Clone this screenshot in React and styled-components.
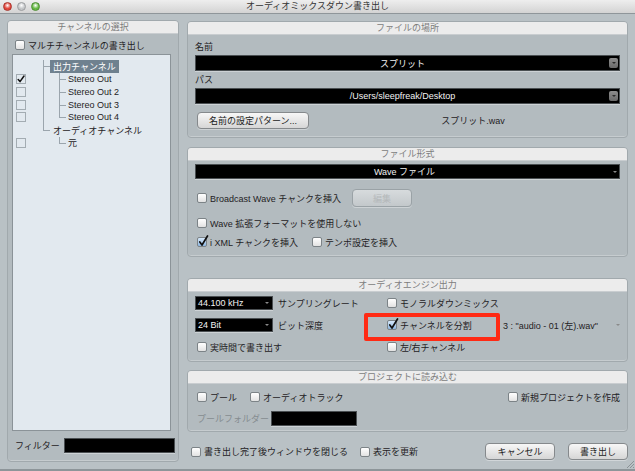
import styled, { createGlobalStyle } from "styled-components";

const GlobalStyle = createGlobalStyle`
	html, body {
		margin: 0;
		padding: 0;
	}

	body {
		background: #b9c1c5;
		font-family: "Liberation Sans", "Noto Sans CJK JP", sans-serif;
		font-size: 9px;
		color: #1f2224;
	}
`;

const Window = styled.div`
	position: relative;
	display: flex;
	flex-direction: column;
	width: 635px;
	height: 471px;
	box-sizing: border-box;
	background: #b9c1c5;
	border-bottom: 2px solid #8d9599;
	overflow: hidden;
`;

const TitleBar = styled.div`
	display: grid;
	grid-template-columns: 1fr auto 1fr;
	align-items: center;
	flex: none;
	height: 13px;
	background: linear-gradient(#eeeeee, #d3d3d3);
	border-bottom: 1px solid #8f969a;

	& > .title {
		color: #333;
		font-size: 9px;
		line-height: 13px;
	}
`;

const Lights = styled.div`
	display: flex;
	gap: 5px;
	padding-left: 3px;
`;

const Light = styled.span`
	width: 9px;
	height: 9px;
	border-radius: 50%;
	box-sizing: border-box;
	border: 1px solid ${({ $edge }) => $edge};
	background: radial-gradient(circle at 50% 35%, #ffffff 0, ${({ $color }) => $color} 55%);
`;

const Body = styled.div`
	display: flex;
	gap: 8px;
	padding: 6px 7px 0 7px;
`;

const Panel = styled.section`
	display: flex;
	flex-direction: column;
	flex: none;
	box-sizing: border-box;
	height: ${({ $h }) => $h}px;
	margin-top: ${({ $mt }) => $mt || 0}px;
	background: #b3bbbf;
	border: 1px solid #a1a9ad;
	border-radius: 4px;
	box-shadow: inset 0 -1px 0 rgba(255, 255, 255, 0.25);
	overflow: hidden;
`;

const PanelHeader = styled.div`
	flex: none;
	height: 12px;
	line-height: 12px;
	background: #ececec;
	color: #7d7d7d;
	text-align: center;
	border-bottom: 1px solid #c9cdd0;
`;

const LeftPanel = styled(Panel)`
	width: 172px;
`;

const RightColumn = styled.div`
	display: flex;
	flex-direction: column;
	width: 441px;
	padding-top: 1px;
`;

const Row = styled.div`
	display: flex;
	align-items: center;
	gap: ${({ $gap }) => $gap ?? 3}px;
	height: ${({ $h }) => $h || 12}px;
	margin-top: ${({ $mt }) => $mt || 0}px;
	padding-left: ${({ $pl }) => $pl || 0}px;
`;

const Box = styled.span`
	position: relative;
	flex: none;
	width: 10px;
	height: 10px;
	box-sizing: border-box;
	border: 1px solid ${({ $flat }) => ($flat ? "#a3acb2" : "#7c8387")};
	border-radius: ${({ $flat }) => ($flat ? 0 : 2)}px;
	background: ${({ $flat, $checked }) =>
		$flat
			? "transparent"
			: $checked
				? "linear-gradient(#d6e8fa, #8db7e2)"
				: "linear-gradient(#ffffff, #e2e2e2)"};

	& > svg {
		position: absolute;
		left: 0;
		top: ${({ $flat }) => ($flat ? 0 : -3)}px;
	}
`;

const Checkbox = ({ checked, flat }) => (
	<Box $checked={checked} $flat={flat}>
		{checked &&
			(flat ? (
				<svg width="8" height="8" viewBox="0 0 8 8">
					<path
						d="M1.2 4.6 L3 6.6 L7 1"
						fill="none"
						stroke="#111"
						strokeWidth="1.5"
						strokeLinecap="round"
						strokeLinejoin="round"
					/>
				</svg>
			) : (
				<svg width="11" height="12" viewBox="0 0 11 12">
					<path
						d="M1.8 7 L4 10 L9.5 1"
						fill="none"
						stroke="#111"
						strokeWidth="1.7"
						strokeLinecap="round"
						strokeLinejoin="round"
					/>
				</svg>
			))}
	</Box>
);

const CheckRow = styled(Row)`
	& > .label {
		white-space: nowrap;
	}
`;

const Tree = styled.div`
	box-sizing: border-box;
	width: 159px;
	height: 377px;
	margin: 4px 0 0 4px;
	padding-top: 5px;
	background: #e2e9ef;
	border: 1px solid #8b9398;
`;

const TreeRow = styled.div`
	display: flex;
	align-items: stretch;
	height: 12.75px;
`;

const CheckCell = styled.div`
	display: flex;
	align-items: center;
	width: 30px;
	padding-left: 3px;
	box-sizing: border-box;
`;

const guideBg = {
	branch:
		"linear-gradient(#9ba5ad, #9ba5ad) 0 0 / 1px 100% no-repeat, linear-gradient(#9ba5ad, #9ba5ad) 0 55% / 100% 1px no-repeat",
	last: "linear-gradient(#9ba5ad, #9ba5ad) 0 0 / 1px 55% no-repeat, linear-gradient(#9ba5ad, #9ba5ad) 0 55% / 100% 1px no-repeat",
	pipe: "linear-gradient(#9ba5ad, #9ba5ad) 0 0 / 1px 100% no-repeat",
	none: "none",
};

const Guide = styled.span`
	flex: none;
	width: ${({ $w }) => $w || 7}px;
	background: ${({ $kind }) => guideBg[$kind || "none"]};
`;

const TreeLabel = styled.span`
	display: flex;
	align-items: center;
	padding: 0 3px 0 ${({ $pl }) => $pl ?? 3}px;
	background: ${({ $selected }) => ($selected ? "#6f818f" : "transparent")};
	color: ${({ $selected }) => ($selected ? "#ffffff" : "#1f2224")};
	white-space: nowrap;
`;

const BlackField = styled.div`
	display: flex;
	align-items: center;
	flex: none;
	box-sizing: border-box;
	width: ${({ $w }) => $w}px;
	height: ${({ $h }) => $h || 15}px;
	margin-top: ${({ $mt }) => $mt || 0}px;
	background: #000;
	border: 1px solid #4a4f52;
	box-shadow: 0 1px 0 rgba(255, 255, 255, 0.35);
	color: #f2f2f2;

	& > .value {
		flex: 1;
		text-align: ${({ $align }) => $align || "center"};
		padding-left: ${({ $align }) => ($align === "left" ? 2 : 0)}px;
		white-space: nowrap;
	}
`;

const ArrowBox = styled.span`
	display: flex;
	align-items: center;
	justify-content: center;
	width: 9px;
	height: 10px;
	margin-right: 1px;
	background: linear-gradient(#8d8d8d, #6a6a6a);
	border-radius: 2px;
`;

const TinyArrow = styled.span`
	width: 0;
	height: 0;
	margin-right: ${({ $mr }) => $mr ?? 3}px;
	border-left: 2px solid transparent;
	border-right: 2px solid transparent;
	border-top: 2px solid ${({ $dark }) => ($dark ? "#2a2a2a" : "#8a8a8a")};
`;

const FieldLabel = styled.div`
	height: 12px;
	line-height: 12px;
	margin-top: ${({ $mt }) => $mt || 0}px;
`;

const PanelBody = styled.div`
	display: flex;
	flex-direction: column;
	padding: 0 7px;
`;

const Button = styled.button`
	flex: none;
	box-sizing: border-box;
	width: ${({ $w }) => $w}px;
	height: ${({ $h }) => $h || 17}px;
	margin-left: ${({ $ml }) => $ml || 0}px;
	padding: 0;
	font: inherit;
	color: ${({ disabled }) => (disabled ? "#b4b8ba" : "#222")};
	background: ${({ disabled }) =>
		disabled ? "linear-gradient(#d7dbdd, #c3c8cb)" : "linear-gradient(#f7f7f7, #d6d6d6)"};
	border: 1px solid ${({ disabled }) => (disabled ? "#9aa2a6" : "#85898c")};
	border-radius: 4px;
	box-shadow: 0 1px 0 rgba(255, 255, 255, 0.35);
`;

const EngineGrid = styled.div`
	display: grid;
	grid-template-columns: 192px 116px 1fr;
	grid-template-rows: 14px 14px 12px;
	row-gap: 8px;
	margin-top: 4px;
	align-items: center;

	& > .last-row {
		margin-top: 2px;
	}
`;

const OutName = styled.div`
	display: flex;
	align-items: center;
	justify-content: ${({ $center }) => ($center ? "center" : "space-between")};
	flex: ${({ $center }) => ($center ? 1 : "none")};
	padding-left: ${({ $center }) => ($center ? 14 : 0)}px;
	white-space: nowrap;
`;

const Grey = styled.span`
	color: #858c90;
	white-space: nowrap;
`;

const Spacer = styled.span`
	flex: ${({ $grow }) => ($grow ? 1 : "none")};
	width: ${({ $w }) => $w || 0}px;
`;

const BottomBar = styled.div`
	display: flex;
	align-items: center;
	gap: 3px;
	height: 17px;
	margin-top: 11px;
	padding-left: 4px;
`;

const Highlight = styled.div`
	position: absolute;
	left: 364px;
	top: 313px;
	width: 136px;
	height: 28px;
	box-sizing: border-box;
	border: 4px solid #ff2a14;
	border-radius: 2px;
	pointer-events: none;
`;

const Grip = styled.svg`
	position: absolute;
	right: 1px;
	bottom: 1px;
`;

const treeRows = [
	{ label: "出力チャンネル", level: 1, selected: true, guide: "branch" },
	{ label: "Stereo Out", level: 2, box: true, checked: true, pipe: "pipe", guide: "branch" },
	{ label: "Stereo Out 2", level: 2, box: true, pipe: "pipe", guide: "branch" },
	{ label: "Stereo Out 3", level: 2, box: true, pipe: "pipe", guide: "branch" },
	{ label: "Stereo Out 4", level: 2, box: true, pipe: "pipe", guide: "last" },
	{ label: "オーディオチャンネル", level: 1, guide: "last" },
	{ label: "元", level: 2, box: true, pipe: "none", guide: "last" },
];

export default function App() {
	return (
		<Window>
			<GlobalStyle />
			<TitleBar>
				<Lights>
					<Light $color="#e2463b" $edge="#a8322a" />
					<Light $color="#c5c7c9" $edge="#9a9c9e" />
					<Light $color="#67b944" $edge="#4b8d30" />
				</Lights>
				<span className="title">オーディオミックスダウン書き出し</span>
				<span />
			</TitleBar>

			<Body>
				<LeftPanel $h={442}>
					<PanelHeader>チャンネルの選択</PanelHeader>
					<CheckRow $mt={6} $h={10} $pl={7}>
						<Checkbox />
						<span className="label">マルチチャンネルの書き出し</span>
					</CheckRow>
					<Tree>
						{treeRows.map((row) => (
							<TreeRow key={row.label}>
								<CheckCell>{row.box && <Checkbox flat checked={row.checked} />}</CheckCell>
								{row.level === 1 ? (
									<>
										<Guide $kind={row.guide} />
										<TreeLabel $selected={row.selected}>{row.label}</TreeLabel>
									</>
								) : (
									<>
										<Guide $kind={row.pipe} $w={16} />
										<Guide $kind={row.guide} />
										<TreeLabel $pl={2}>{row.label}</TreeLabel>
									</>
								)}
							</TreeRow>
						))}
					</Tree>
					<Row $mt={7} $h={15} $pl={7} $gap={4}>
						<span>フィルター</span>
						<BlackField $w={111} />
					</Row>
				</LeftPanel>

				<RightColumn>
					<Panel $h={117}>
						<PanelHeader>ファイルの場所</PanelHeader>
						<PanelBody>
							<FieldLabel $mt={6}>名前</FieldLabel>
							<BlackField $w={425} $h={16} $mt={2}>
								<span className="value">スプリット</span>
								<ArrowBox>
									<TinyArrow $mr={0} $dark />
								</ArrowBox>
							</BlackField>
							<FieldLabel $mt={3}>パス</FieldLabel>
							<BlackField $w={425} $h={16} $mt={2}>
								<span className="value">/Users/sleepfreak/Desktop</span>
								<ArrowBox>
									<TinyArrow $mr={0} $dark />
								</ArrowBox>
							</BlackField>
							<Row $mt={8} $h={17}>
								<Button $w={112} $ml={2}>
									名前の設定パターン...
								</Button>
								<OutName $center>スプリット.wav</OutName>
							</Row>
						</PanelBody>
					</Panel>

					<Panel $h={110} $mt={9}>
						<PanelHeader>ファイル形式</PanelHeader>
						<PanelBody>
							<BlackField $w={425} $mt={3}>
								<span className="value">Wave ファイル</span>
								<TinyArrow $mr={2} />
							</BlackField>
							<CheckRow $mt={10} $h={18} $pl={2}>
								<Checkbox />
								<span className="label">Broadcast Wave チャンクを挿入</span>
								<Button $w={60} $h={18} $ml={8} disabled>
									編集
								</Button>
							</CheckRow>
							<CheckRow $mt={10} $pl={2}>
								<Checkbox />
								<span className="label">Wave 拡張フォーマットを使用しない</span>
							</CheckRow>
							<CheckRow $mt={7} $pl={2}>
								<Checkbox checked />
								<span className="label">i XML チャンクを挿入</span>
								<Spacer $w={8} />
								<Checkbox />
								<span className="label">テンポ設定を挿入</span>
							</CheckRow>
						</PanelBody>
					</Panel>

					<Panel $h={84} $mt={21}>
						<PanelHeader>オーディオエンジン出力</PanelHeader>
						<PanelBody>
							<EngineGrid>
								<Row $gap={5} $h={14}>
									<BlackField $w={78} $h={14} $align="left">
										<span className="value">44.100 kHz</span>
										<TinyArrow />
									</BlackField>
									<span>サンプリングレート</span>
								</Row>
								<CheckRow>
									<Checkbox />
									<span className="label">モノラルダウンミックス</span>
								</CheckRow>
								<span />

								<Row $gap={5} $h={14}>
									<BlackField $w={78} $h={14} $align="left">
										<span className="value">24 Bit</span>
										<TinyArrow />
									</BlackField>
									<span>ビット深度</span>
								</Row>
								<CheckRow>
									<Checkbox checked />
									<span className="label">チャンネルを分割</span>
								</CheckRow>
								<OutName>
									<span>3 : "audio - 01 (左).wav"</span>
									<TinyArrow $mr={0} />
								</OutName>

								<CheckRow className="last-row" $pl={2}>
									<Checkbox />
									<span className="label">実時間で書き出す</span>
								</CheckRow>
								<CheckRow className="last-row">
									<Checkbox />
									<span className="label">左/右チャンネル</span>
								</CheckRow>
								<span />
							</EngineGrid>
						</PanelBody>
					</Panel>

					<Panel $h={62} $mt={8}>
						<PanelHeader>プロジェクトに読み込む</PanelHeader>
						<PanelBody>
							<CheckRow $mt={7} $pl={2}>
								<Checkbox />
								<span className="label">プール</span>
								<Spacer $w={7} />
								<Checkbox />
								<span className="label">オーディオトラック</span>
								<Spacer $grow />
								<Checkbox />
								<span className="label">新規プロジェクトを作成</span>
							</CheckRow>
							<Row $mt={8} $h={15} $pl={2} $gap={2}>
								<Grey>プールフォルダー</Grey>
								<BlackField $w={86} />
							</Row>
						</PanelBody>
					</Panel>

					<BottomBar>
						<Checkbox />
						<span>書き出し完了後ウィンドウを閉じる</span>
						<Spacer $w={6} />
						<Checkbox />
						<span>表示を更新</span>
						<Spacer $grow />
						<Button $w={70}>キャンセル</Button>
						<Button $w={60} $ml={10}>
							書き出し
						</Button>
					</BottomBar>
				</RightColumn>
			</Body>

			<Highlight />
			<Grip width="8" height="8" viewBox="0 0 8 8">
				<path d="M1 8 L8 1 M4 8 L8 4 M7 8 L8 7" stroke="#8a9296" strokeWidth="1" />
			</Grip>
		</Window>
	);
}
